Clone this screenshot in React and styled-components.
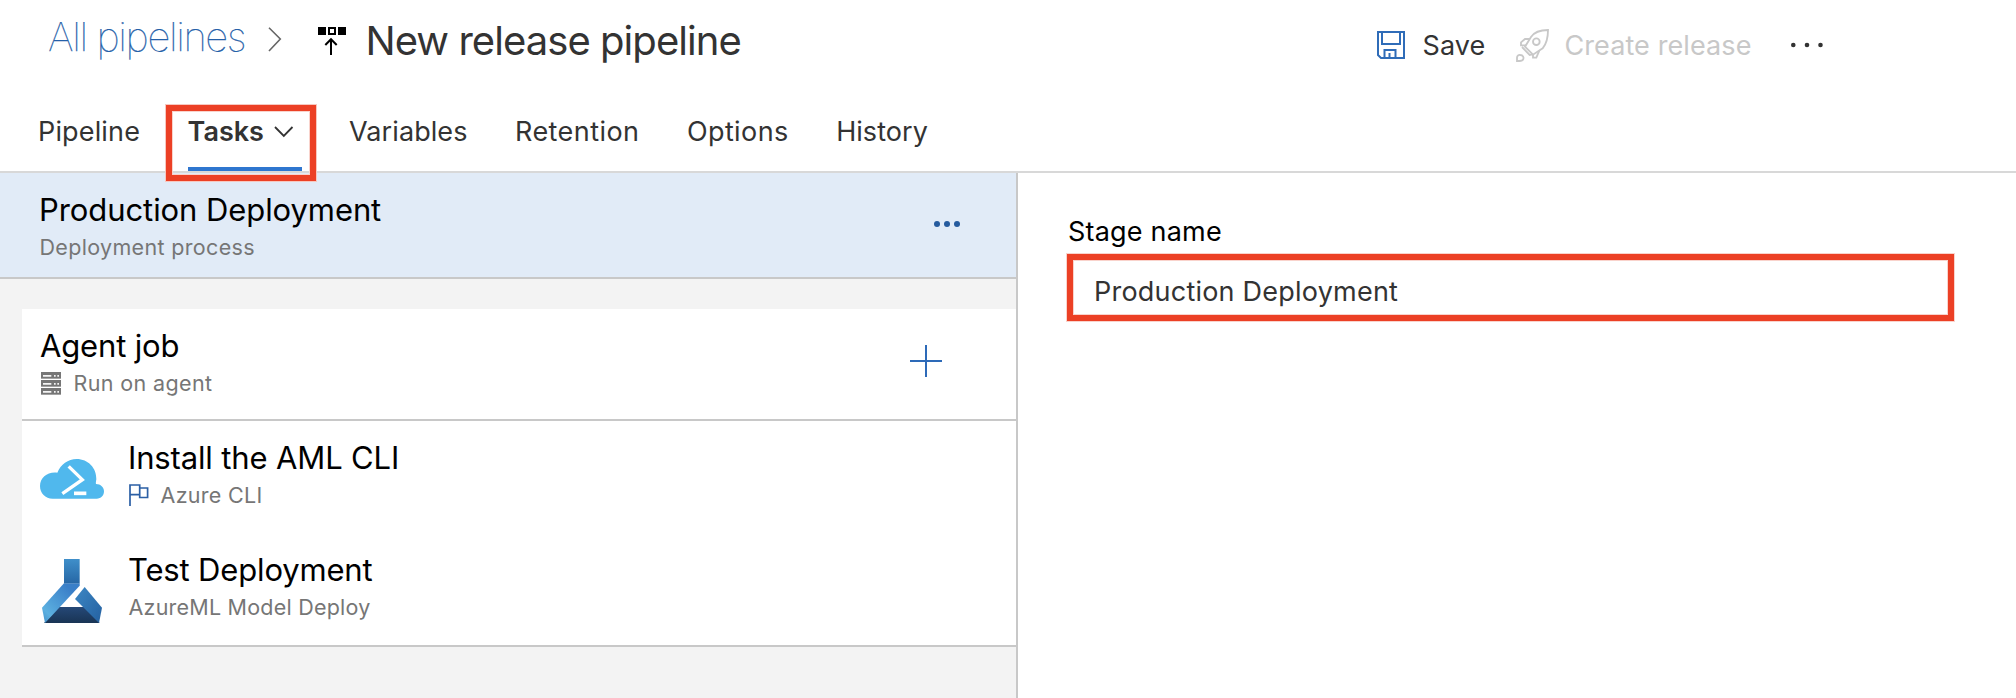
import React from 'react';
import styled, { createGlobalStyle } from 'styled-components';

const GlobalStyle = createGlobalStyle`
  *, *::before, *::after { box-sizing: border-box; }
  body {
    margin: 0;
    background: #fff;
    color: #333;
    font-family: Inter, "Liberation Sans", sans-serif;
  }
  svg { display: block; flex: none; }
`;

const Page = styled.div`
  display: flex;
  flex-direction: column;
  height: 698px;
  overflow: hidden;
`;

const Header = styled.header`
  height: 173px;
  border-bottom: 2px solid #d8d8d8;
`;

const TitleBar = styled.div`
  display: flex;
  align-items: flex-start;
  height: 111px;
  padding: 0 193px 0 48px;
`;

const Breadcrumb = styled.nav`
  display: flex;
  align-items: flex-start;
  svg { margin-top: 27px; }
`;

const CrumbLink = styled.a`
  width: 199px;
  margin: 7px 21px 0 0;
  color: #2560a8;
  font-size: 40px;
  font-weight: 100;
  line-height: 60px;
  letter-spacing: -1.4px;
  white-space: nowrap;
  -webkit-text-stroke: 0.25px #2560a8;
`;

const PageTitle = styled.h1`
  margin: 11px 0 0 19.5px;
  font-size: 40px;
  font-weight: 400;
  line-height: 60px;
  letter-spacing: -0.95px;
  white-space: nowrap;
`;

const Actions = styled.div`
  display: flex;
  align-items: center;
  height: 40px;
  margin: 25px 0 0 auto;
`;

const Action = styled.button`
  display: flex;
  align-items: center;
  gap: ${(p) => p.$gap}px;
  margin-right: ${(p) => p.$after}px;
  padding: 0;
  border: 0;
  background: none;
  color: ${(p) => (p.disabled ? '#c8c8c8' : '#333')};
  font: 400 27px/40px Inter, "Liberation Sans", sans-serif;
  letter-spacing: 0.1px;
  white-space: nowrap;
`;

const ActionLabel = styled.span`
  padding-top: 1px;
`;

const Tabs = styled.div`
  display: flex;
  gap: 47.5px;
  height: 60px;
  padding-left: 38px;
`;

const Tab = styled.div`
  position: relative;
  display: flex;
  gap: 10px;
  height: 60px;
  padding-top: 1px;
  border-bottom: 4px solid ${(p) => (p.$active ? '#2f76cf' : 'transparent')};
  font-size: 27px;
  font-weight: ${(p) => (p.$active ? 600 : 400)};
  line-height: 40px;
  letter-spacing: ${(p) => p.$tracking}px;
  width: ${(p) => (p.$active ? '114px' : 'auto')};
  white-space: nowrap;
  svg { margin-top: 14px; }
`;

const TabHighlight = styled.div`
  position: absolute;
  left: -22px;
  top: -6px;
  width: 150px;
  height: 76px;
  border: 6px solid #ec4025;
  box-shadow: 0 0 0 1px #f7c8c0, inset 0 0 0 1px #f9d3cc;
  z-index: 2;
`;

const Body = styled.main`
  display: flex;
  flex: 1;
`;

const ProcessPane = styled.section`
  width: 1018px;
  border-right: 2px solid #c8c8c8;
  background: #f3f3f3;
`;

const StageRow = styled.div`
  display: flex;
  justify-content: space-between;
  height: 106px;
  padding: 17px 56px 0 39px;
  border-bottom: 2px solid #c8c8c8;
  background: #e1ebf7;
  > svg { margin-top: 31px; }
`;

const JobList = styled.div`
  margin: 30px 0 0 22px;
  background: #fff;
  border-bottom: 2px solid #c8c8c8;
`;

const JobRow = styled.div`
  display: flex;
  justify-content: space-between;
  height: 112px;
  padding: 17px 74px 0 18px;
  border-bottom: 2px solid #c8c8c8;
  > svg { margin-top: 19px; }
`;

const TaskRow = styled.div`
  display: flex;
  height: 112px;
  padding: 17px 0 0 18px;
`;

const TaskIcon = styled.div`
  width: 64px;
  margin: ${(p) => p.$top}px 24px 0 0;
`;

const RowTitle = styled.div`
  color: #000;
  font-size: 31px;
  line-height: 40px;
  letter-spacing: ${(p) => p.$tracking || 0}px;
  white-space: nowrap;
`;

const RowDetail = styled.div`
  display: flex;
  align-items: center;
  gap: ${(p) => p.$gap || 0}px;
  margin: 2px 0 0 0.5px;
  color: #767676;
  font-size: 21.5px;
  line-height: 30px;
  letter-spacing: ${(p) => p.$tracking}px;
  white-space: nowrap;
`;

const DetailPane = styled.section`
  flex: 1;
  padding: 39px 62px 0 49px;
`;

const FieldLabel = styled.label`
  display: block;
  margin-left: 1px;
  color: #000;
  font-size: 27px;
  line-height: 40px;
  letter-spacing: 0.2px;
`;

const FieldBox = styled.div`
  height: 67px;
  margin-top: 2px;
  padding: 12px 0 0 21px;
  border: 6px solid #ec4025;
  box-shadow: 0 0 0 1px #f9d3cc, inset 0 0 0 1px #f9d3cc;
  font-size: 27px;
  line-height: 40px;
  letter-spacing: 0.22px;
`;

const CrumbChevron = () => (
  <svg width="14" height="25" viewBox="0 0 14 25" fill="none" stroke="#666" strokeWidth="1.6">
    <path d="M1 .7 12.3 12 1 24" />
  </svg>
);

const PipelineIcon = () => (
  <svg width="28" height="28" viewBox="0 0 28 28" fill="none" stroke="#000">
    <path d="M0 0h8v8H0zM20 0h8v8h-8z" fill="#000" stroke="none" />
    <path d="M11 1h6v6h-6z" strokeWidth="2" />
    <path d="M13 28V12.5M7.3 18 13 12.2 18.7 18" strokeWidth="2" />
  </svg>
);

const IconSlot = styled.span`
  margin-left: 36px;
`;

const SaveIcon = () => (
  <svg width="28" height="28" viewBox="0 0 28 28" fill="none" stroke="#2f6cb8" strokeWidth="2">
    <path d="M1 1h26v26H4L1 24zM5 1v12h18V1M7.5 27v-8h11v8M12.5 27v-5" />
  </svg>
);

const RocketIcon = () => (
  <svg width="33" height="33" viewBox="17 19 99 99" fill="none" stroke="#c8c8c8" strokeWidth="5.5">
    <path d="M113 22C90 22 72 28 62 43L44 72 68 96 97 77C108 64 113 45 113 22Z" />
    <circle cx="78" cy="57" r="10" />
    <path d="M59 49H44L32 59v9h15M68 94v11h10l9-21M35 73l23 24 9-2" />
    <path d="M20 115v-10c0-6 5-9 10-8 8 1 11 7 9 12-2 6-8 6-12 6Z" />
  </svg>
);

const MoreIcon = () => (
  <svg width="32" height="8" viewBox="0 0 32 8" fill="#333">
    <circle cx="2.3" cy="4" r="2.3" />
    <circle cx="16" cy="4" r="2.3" />
    <circle cx="29.5" cy="4" r="2.3" />
  </svg>
);

const TabChevron = () => (
  <svg width="20" height="12" viewBox="0 0 20 12" fill="none" stroke="#333" strokeWidth="1.8">
    <path d="m1 1 8.8 9L18.5 1" />
  </svg>
);

const StageMenuIcon = () => (
  <svg width="26" height="6" viewBox="0 0 26 6" fill="#255b9e">
    <circle cx="3" cy="3" r="3" />
    <circle cx="13" cy="3" r="3" />
    <circle cx="23" cy="3" r="3" />
  </svg>
);

const PlusIcon = () => (
  <svg width="32" height="32" viewBox="0 0 32 32" stroke="#2d6ab8" strokeWidth="2">
    <path d="M16 0v32M0 16h32" />
  </svg>
);

const ServerIcon = () => (
  <svg width="20" height="23" viewBox="0 0 60 69">
    {[0, 24, 48].map((y) => (
      <g key={y}>
        <path d={`M0 ${y}h60v20H0z`} fill="#767676" />
        <path d={`M6 ${y + 9}h25v5H6zM39 ${y + 9}h5v5h-5zM49 ${y + 9}h5v5h-5z`} fill="#f4f4f4" />
      </g>
    ))}
  </svg>
);

const FlagIcon = () => (
  <svg width="20" height="22" viewBox="0 0 20 22" fill="none" stroke="#2b5fa5" strokeWidth="1.7">
    <path d="M1 22V1h9.7v9.7H1M10.7 4h7.9v9.5h-7.9v-3" />
  </svg>
);

const CloudShellIcon = () => (
  <svg width="64" height="40" viewBox="120 147 192 120">
    <path
      d="M158 266C136 266 120 250 120 228C120 202 144 184 172 188C182 163 204 147 230 147C264 147 290 174 289 208C288 214 287 219 288 222C302 222 312 232 312 244C312 257 303 266 290 266Z"
      fill="#50b8ed"
    />
    <path d="m206 169 41 40-60 42" fill="none" stroke="#fff" strokeWidth="10" />
    <path d="M222 250h37" stroke="#fff" strokeWidth="11" />
  </svg>
);

const MachineLearningIcon = () => (
  <svg width="64" height="64" viewBox="12 20 192 192">
    <defs>
      <linearGradient id="neck" x1="0" y1="0" x2="0" y2="1">
        <stop offset="0" stopColor="#3f8fca" />
        <stop offset="1" stopColor="#2767a5" />
      </linearGradient>
      <linearGradient id="left" x1="1" y1="0" x2="0" y2="1">
        <stop offset=".2" stopColor="#3a7fc8" />
        <stop offset=".8" stopColor="#5cb0e0" />
        <stop offset="1" stopColor="#3f8dc8" />
      </linearGradient>
      <linearGradient id="right" x1="0" y1="0" x2="1" y2="1">
        <stop offset="0" stopColor="#3c87c4" />
        <stop offset="1" stopColor="#2460a0" />
      </linearGradient>
      <linearGradient id="base" x1="0" y1="0" x2="0" y2="1">
        <stop offset="0" stopColor="#254877" />
        <stop offset="1" stopColor="#193454" />
      </linearGradient>
    </defs>
    <path d="M24 212 69 164h76l46 48Z" fill="url(#base)" />
    <path d="M84 93h47v7L27 212l-9-46Z" fill="url(#left)" />
    <path d="M84 20h47v73H84Z" fill="url(#neck)" />
    <path d="m146 104 52 62-9 46-72-72Z" fill="url(#right)" />
  </svg>
);

export default function App() {
  return (
    <Page>
      <GlobalStyle />
      <Header>
        <TitleBar>
          <Breadcrumb>
            <CrumbLink>All pipelines</CrumbLink>
            <CrumbChevron />
            <IconSlot><PipelineIcon /></IconSlot>
            <PageTitle>New release pipeline</PageTitle>
          </Breadcrumb>
          <Actions>
            <Action $gap={18} $after={31}>
              <SaveIcon />
              <ActionLabel>Save</ActionLabel>
            </Action>
            <Action $gap={15} $after={39.5} disabled>
              <RocketIcon />
              <ActionLabel>Create release</ActionLabel>
            </Action>
            <MoreIcon />
          </Actions>
        </TitleBar>
        <Tabs>
          <Tab $tracking={0.15}>Pipeline</Tab>
          <Tab $tracking={0} $active>
            Tasks
            <TabChevron />
            <TabHighlight />
          </Tab>
          <Tab $tracking={0.08}>Variables</Tab>
          <Tab $tracking={0.43}>Retention</Tab>
          <Tab $tracking={0.4}>Options</Tab>
          <Tab $tracking={0.05}>History</Tab>
        </Tabs>
      </Header>
      <Body>
        <ProcessPane>
          <StageRow>
            <div>
              <RowTitle $tracking={-0.08}>Production Deployment</RowTitle>
              <RowDetail $tracking={0.33}>Deployment process</RowDetail>
            </div>
            <StageMenuIcon />
          </StageRow>
          <JobList>
            <JobRow>
              <div>
                <RowTitle $tracking={-0.15}>Agent job</RowTitle>
                <RowDetail $gap={13} $tracking={0.37}><ServerIcon />Run on agent</RowDetail>
              </div>
              <PlusIcon />
            </JobRow>
            <TaskRow>
              <TaskIcon $top={21}><CloudShellIcon /></TaskIcon>
              <div>
                <RowTitle $tracking={-0.14}>Install the AML CLI</RowTitle>
                <RowDetail $gap={12} $tracking={0.3}><FlagIcon />Azure CLI</RowDetail>
              </div>
            </TaskRow>
            <TaskRow>
              <TaskIcon $top={9}><MachineLearningIcon /></TaskIcon>
              <div>
                <RowTitle $tracking={-0.16}>Test Deployment</RowTitle>
                <RowDetail $tracking={0.22}>AzureML Model Deploy</RowDetail>
              </div>
            </TaskRow>
          </JobList>
        </ProcessPane>
        <DetailPane>
          <FieldLabel>Stage name</FieldLabel>
          <FieldBox>Production Deployment</FieldBox>
        </DetailPane>
      </Body>
    </Page>
  );
}
